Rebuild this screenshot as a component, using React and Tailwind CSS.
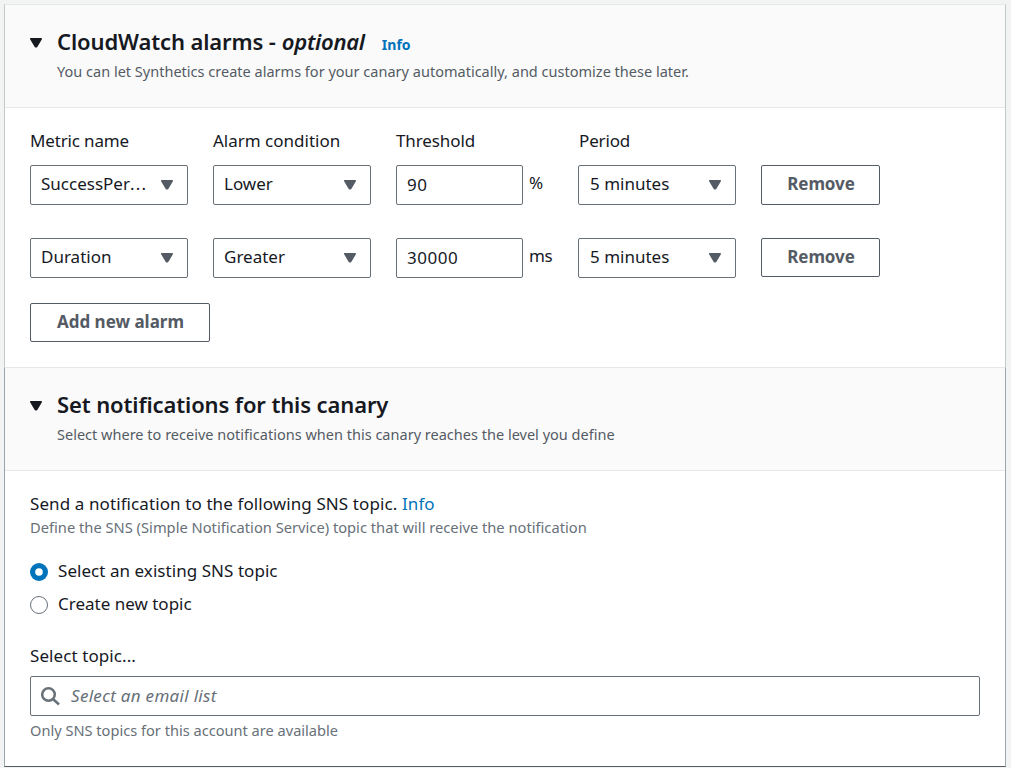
import React from "react";

function Caret({ className }) {
  return (
    <svg className={className} width="14" height="12" viewBox="0 0 14 12" fill="currentColor" stroke="currentColor" strokeWidth="1.6" strokeLinejoin="round">
      <path d="M1.8 1.8h10.4L7.6 9.7H6.4z" />
    </svg>
  );
}

function SectionHeader({ title, description }) {
  return (
    <header className="flex h-[103px] items-start border-b border-[#e6e9e9] bg-[#fafafa] pl-6 pt-5">
      <Caret className="mt-3 shrink-0 text-[#16191f]" />
      <div className="ml-[14px]">
        <h2 className="flex h-8 items-baseline whitespace-nowrap text-[22px] font-semibold leading-8 tracking-[-0.12px] text-[#16191f]">{title}</h2>
        <p className="mt-1 whitespace-nowrap text-[14.5px] leading-5 tracking-[0.01px] text-[#545b64]">{description}</p>
      </div>
    </header>
  );
}

function Select({ value, className = "" }) {
  return (
    <button className="flex h-10 w-[158px] items-center justify-between rounded-[2px] border border-[#687078] bg-white pl-[10px] pr-[13px] text-left">
      <span className={"whitespace-nowrap pb-[2px] " + className}>{value}</span>
      <Caret className="shrink-0 text-[#545b64]" />
    </button>
  );
}

function Button({ children, className }) {
  return (
    <button className={"rounded-[2px] border border-[#545b64] bg-white pb-[2px] pl-px text-center font-bold text-[#545b64] " + className}>
      {children}
    </button>
  );
}

function AlarmRow({ metric, condition, threshold, unit, period, buttonClass }) {
  return (
    <div className="flex">
      <div className="w-[183px]">
        <Select value={metric.endsWith("…") ? <>{metric.slice(0, -1)}<span className="tracking-[1.2px]">...</span></> : metric} />
      </div>
      <div className="w-[183px]"><Select value={condition} /></div>
      <div className="flex w-[182px]">
        <input className="h-10 w-[127px] rounded-[2px] border border-[#687078] bg-white px-[10px] pb-[2px] tracking-[0.5px]" defaultValue={threshold} />
        <span className="ml-[6px] mt-[6px] leading-6 tracking-[-0.3px]">{unit}</span>
      </div>
      <div className="w-[183px]"><Select value={period} className="pl-px" /></div>
      <Button className={"w-[119px] tracking-[-0.1px] " + buttonClass}>Remove</Button>
    </div>
  );
}

export default function App() {
  return (
    <div className="h-[768px] w-[1011px] overflow-hidden bg-[#f2f3f3] pl-1 pt-1 font-['Noto_Sans','Open_Sans',sans-serif] text-[17px] text-[#16191f]">
      <main className="w-[1002px]">
        <section className="h-[363px] border-x border-t border-x-[#c3c9cb] border-t-[#e6e9e9] bg-white">
          <SectionHeader
            title={<>
              <span>CloudWatch alarms -</span>
              <span className="ml-[6px] tracking-[-0.25px] italic">optional</span>
              <a className="ml-[17px] text-[14px] font-bold tracking-normal text-[#0073bb]">Info</a>
            </>}
            description="You can let Synthetics create alarms for your canary automatically, and customize these later."
          />
          <div className="pl-[25px] pt-[21px]">
            <div className="flex h-6 leading-6">
              <span className="w-[183px] tracking-[-0.15px]">Metric name</span>
              <span className="w-[183px]">Alarm condition</span>
              <span className="w-[183px] tracking-[-0.1px]">Threshold</span>
              <span className="tracking-[-0.15px]">Period</span>
            </div>
            <div className="mt-3 flex flex-col gap-[33px]">
              <AlarmRow metric="SuccessPer…" condition="Lower" threshold="90" unit="%" period="5 minutes" buttonClass="h-10" />
              <AlarmRow metric="Duration" condition="Greater" threshold="30000" unit="ms" period="5 minutes" buttonClass="h-[39px]" />
            </div>
            <Button className="mt-[25px] h-[39px] w-[180px]">Add new alarm</Button>
          </div>
        </section>
        <section className="h-[400px] border-x border-b border-t border-x-[#9ba5ab] border-b-[#545b64] border-t-[#e6e9e9] bg-white">
          <SectionHeader
            title="Set notifications for this canary"
            description="Select where to receive notifications when this canary reaches the level you define"
          />
          <div className="px-[25px] pt-[21px]">
            <p className="h-6 whitespace-nowrap leading-6 tracking-[0.1px]">Send a notification to the following SNS topic. <a className="text-[#0073bb]">Info</a></p>
            <p className="h-6 whitespace-nowrap text-[14.7px] leading-[22px] text-[#687078]">Define the SNS (Simple Notification Service) topic that will receive the notification</p>
            <label className="mt-[19px] flex h-6 items-center">
              <svg className="mt-[2px]" width="18" height="18" viewBox="0 0 18 18">
                <circle cx="9" cy="9" r="9" fill="#0073bb" />
                <circle cx="9" cy="9" r="3.8" fill="#fff" />
              </svg>
              <span className="ml-[10px] tracking-[0.05px]">Select an existing SNS topic</span>
            </label>
            <label className="mt-[9px] flex h-6 items-center">
              <span className="mt-[2px] h-[18px] w-[18px] rounded-full border border-[#687078] bg-white" />
              <span className="ml-[10px]">Create new topic</span>
            </label>
            <p className="mt-7 h-6 leading-6 tracking-[0.08px]">Select topic...</p>
            <div className="mt-2 flex h-10 items-center rounded-[2px] border border-[#687078] bg-white pl-[10px]">
              <svg width="20" height="20" viewBox="0 0 20 20" fill="none" stroke="#687078" strokeWidth="2.5">
                <circle cx="7.5" cy="8.5" r="6.3" />
                <path d="M12 13l6 5.5" />
              </svg>
              <span className="ml-[10px] pb-px italic tracking-[0.3px] text-[#687078]">Select an email list</span>
            </div>
            <p className="mt-[3px] text-[14.6px] leading-[22px] text-[#687078]">Only SNS topics for this account are available</p>
          </div>
        </section>
      </main>
    </div>
  );
}
